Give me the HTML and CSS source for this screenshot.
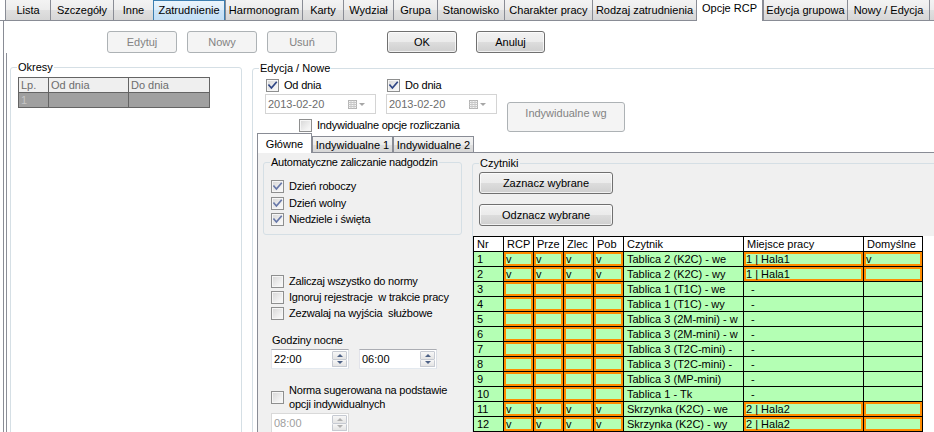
FILE: index.html
```html
<!DOCTYPE html>
<html lang="pl">
<head>
<meta charset="utf-8">
<title>Opcje RCP</title>
<link rel="stylesheet" href="styles.css">
</head>
<body>
<div class="app">
  <div class="tabs">
    <div class="tab w-lista">Lista</div>
    <div class="tab w-szcz">Szczegóły</div>
    <div class="tab w-inne">Inne</div>
    <div class="tab w-zatr hov">Zatrudnienie</div>
    <div class="tab w-harm">Harmonogram</div>
    <div class="tab w-karty">Karty</div>
    <div class="tab w-wydz">Wydział</div>
    <div class="tab w-grupa">Grupa</div>
    <div class="tab w-stan">Stanowisko</div>
    <div class="tab w-char">Charakter pracy</div>
    <div class="tab w-rodz">Rodzaj zatrudnienia</div>
    <div class="tab w-rcp sel">Opcje RCP</div>
    <div class="tab w-edg">Edycja grupowa</div>
    <div class="tab w-nowy">Nowy / Edycja</div>
    <div class="tab w-more"></div>
  </div>

  <div class="page">
    <div class="toolbar">
      <div class="btn dis">Edytuj</div>
      <div class="btn dis b-nowy">Nowy</div>
      <div class="btn dis b-usun">Usuń</div>
      <div class="btn b-ok">OK</div>
      <div class="btn b-anuluj">Anuluj</div>
    </div>

    <div class="main">
      <div class="gbox okresy">
        <span class="gtitle">Okresy</span>
        <table class="ptable">
          <tr><th class="c-lp">Lp.</th><th class="c-od">Od dnia</th><th class="c-do">Do dnia</th></tr>
          <tr><td>1</td><td></td><td></td></tr>
        </table>
      </div>

      <div class="gbox edycja">
        <span class="gtitle">Edycja / Nowe</span>
        <div class="erow1">
          <label class="chk c-oddnia"><span class="cb"><svg viewBox="0 0 11 11"><path d="M2 5.2 L4.4 8 L9.2 2.4" class="ck"/></svg></span>Od dnia</label>
          <label class="chk"><span class="cb"><svg viewBox="0 0 11 11"><path d="M2 5.2 L4.4 8 L9.2 2.4" class="ck"/></svg></span>Do dnia</label>
        </div>
        <div class="erow2">
          <div class="dcol">
            <div class="dates">
              <div class="dtp"><span>2013-02-20</span><svg class="cal" viewBox="0 0 9 9"><rect x="0.5" y="0.5" width="8" height="8" class="calr"/><path d="M0.5 2.5H8.5M0.5 4.5H8.5M0.5 6.5H8.5M3 0.5V8.5M6 0.5V8.5" class="calg"/></svg><span class="dda"></span></div>
              <div class="dtp"><span>2013-02-20</span><svg class="cal" viewBox="0 0 9 9"><rect x="0.5" y="0.5" width="8" height="8" class="calr"/><path d="M0.5 2.5H8.5M0.5 4.5H8.5M0.5 6.5H8.5M3 0.5V8.5M6 0.5V8.5" class="calg"/></svg><span class="dda"></span></div>
            </div>
            <label class="chk indyw"><span class="cb"></span>Indywidualne opcje rozliczania</label>
          </div>
          <div class="btn dis wg">Indywidualne wg</div>
        </div>

        <div class="itabs">
          <div class="itab isel">Główne</div>
          <div class="itab">Indywidualne 1</div>
          <div class="itab">Indywidualne 2</div>
        </div>

        <div class="tpage">
          <div class="lcol">
            <div class="gbox auto">
              <span class="gtitle">Automatyczne zaliczanie nadgodzin</span>
              <div class="alist">
                <label class="chk"><span class="cb"><svg viewBox="0 0 11 11"><path d="M2 5.2 L4.4 8 L9.2 2.4" class="ck lt"/></svg></span>Dzień roboczy</label>
                <label class="chk a2"><span class="cb"><svg viewBox="0 0 11 11"><path d="M2 5.2 L4.4 8 L9.2 2.4" class="ck lt"/></svg></span>Dzień wolny</label>
                <label class="chk a3"><span class="cb"><svg viewBox="0 0 11 11"><path d="M2 5.2 L4.4 8 L9.2 2.4" class="ck lt"/></svg></span>Niedziele i święta</label>
              </div>
            </div>
            <div class="opts">
              <label class="chk"><span class="cb"></span>Zaliczaj wszystko do normy</label>
              <label class="chk"><span class="cb"></span>Ignoruj rejestracje&nbsp; w trakcie pracy</label>
              <label class="chk"><span class="cb"></span>Zezwalaj na wyjścia&nbsp; służbowe</label>
            </div>
            <div class="gn">Godziny nocne</div>
            <div class="times">
              <div class="spin"><span>22:00</span><span class="sb"><i class="up"></i><i class="dn"></i></span></div>
              <div class="spin"><span>06:00</span><span class="sb"><i class="up"></i><i class="dn"></i></span></div>
            </div>
            <label class="chk norma"><span class="cb"></span><span>Norma sugerowana na podstawie<br>opcji indywidualnych</span></label>
            <div class="spin sdis"><span>08:00</span><span class="sb"><i class="up"></i><i class="dn"></i></span></div>
          </div>

          <div class="gbox czyt">
            <span class="gtitle">Czytniki</span>
            <div class="btn zb">Zaznacz wybrane</div>
            <div class="btn ob">Odznacz wybrane</div>
            <div class="gridwrap">
              <table class="grid">
                <tr><th class="g-nr">Nr</th><th class="g-f">RCP</th><th class="g-f">Prze</th><th class="g-f">Zlec</th><th class="g-f">Pob</th><th class="g-cz">Czytnik</th><th class="g-mp">Miejsce pracy</th><th class="g-dm">Domyślne</th></tr>
                <tr><td>1</td><td class="o">v</td><td class="o">v</td><td class="o">v</td><td class="o">v</td><td>Tablica 2 (K2C) - we</td><td class="o">1 | Hala1</td><td class="o">v</td></tr>
                <tr><td>2</td><td class="o">v</td><td class="o">v</td><td class="o">v</td><td class="o">v</td><td>Tablica 2 (K2C) - wy</td><td class="o">1 | Hala1</td><td class="o"></td></tr>
                <tr><td>3</td><td class="o"></td><td class="o"></td><td class="o"></td><td class="o"></td><td>Tablica 1 (T1C) - we</td><td class="dash">-</td><td></td></tr>
                <tr><td>4</td><td class="o"></td><td class="o"></td><td class="o"></td><td class="o"></td><td>Tablica 1 (T1C) - wy</td><td class="dash">-</td><td></td></tr>
                <tr><td>5</td><td class="o"></td><td class="o"></td><td class="o"></td><td class="o"></td><td>Tablica 3 (2M-mini) - w</td><td class="dash">-</td><td></td></tr>
                <tr><td>6</td><td class="o"></td><td class="o"></td><td class="o"></td><td class="o"></td><td>Tablica 3 (2M-mini) - w</td><td class="dash">-</td><td></td></tr>
                <tr><td>7</td><td class="o"></td><td class="o"></td><td class="o"></td><td class="o"></td><td>Tablica 3 (T2C-mini) -</td><td class="dash">-</td><td></td></tr>
                <tr><td>8</td><td class="o"></td><td class="o"></td><td class="o"></td><td class="o"></td><td>Tablica 3 (T2C-mini) -</td><td class="dash">-</td><td></td></tr>
                <tr><td>9</td><td class="o"></td><td class="o"></td><td class="o"></td><td class="o"></td><td>Tablica 3 (MP-mini)</td><td class="dash">-</td><td></td></tr>
                <tr><td>10</td><td class="o"></td><td class="o"></td><td class="o"></td><td class="o"></td><td>Tablica 1 - Tk</td><td class="dash">-</td><td></td></tr>
                <tr><td>11</td><td class="o">v</td><td class="o">v</td><td class="o">v</td><td class="o">v</td><td>Skrzynka (K2C) - we</td><td class="o">2 | Hala2</td><td class="o"></td></tr>
                <tr><td>12</td><td class="o">v</td><td class="o">v</td><td class="o">v</td><td class="o">v</td><td>Skrzynka (K2C) - wy</td><td class="o">2 | Hala2</td><td class="o"></td></tr>
              </table>
            </div>
          </div>
        </div>
      </div>
    </div>
  </div>
</div>
</body>
</html>
```

FILE: styles.css
```css
* { box-sizing: border-box; }
html, body { margin: 0; padding: 0; }
body {
  font-family: "Liberation Sans", Arial, sans-serif;
  font-size: 11px;
  color: #000;
  background: #fff;
}
.app { width: 934px; height: 432px; overflow: hidden; background: #fff; }

/* top tab strip */
.tabs {
  display: flex;
  height: 21px;
  padding-left: 5px;
  border-bottom: 1px solid #898c95;
  background: #fff;
}
.tab {
  flex: none;
  height: 20px;
  border-left: 1px solid #898c95;
  background: linear-gradient(#f3f3f3 0%, #ececec 50%, #e0e0e0 50%, #d6d6d6 100%);
  text-align: center;
  line-height: 20px;
  white-space: nowrap;
  overflow: hidden;
}
.tab.hov {
  border: 1px solid #3c7fb1;
  border-bottom: none;
  background: linear-gradient(#ebf5fc 0%, #dcedfa 50%, #cce4f7 50%, #c3dff5 100%);
  line-height: 19px;
}
.tab.sel {
  height: 21px;
  background: #fff;
  line-height: 17px;
  border-right: 1px solid #898c95;
}
.w-lista { width: 45px; }
.w-szcz { width: 63px; }
.w-inne { width: 40px; }
.w-zatr { width: 72px; }
.w-harm { width: 77px; }
.w-karty { width: 41px; }
.w-wydz { width: 50px; }
.w-grupa { width: 44px; }
.w-stan { width: 67px; }
.w-char { width: 88px; }
.w-rodz { width: 104px; }
.w-rcp { width: 67px; }
.w-edg { width: 84px; }
.w-nowy { width: 82px; }
.w-more { width: 20px; }

/* page */
.page {
  margin-left: 3px;
  height: 411px;
  border-left: 1px solid #898c95;
  background: #fff;
}
.toolbar {
  display: flex;
  height: 32px;
  padding: 10px 0 0 103px;
}
.btn {
  flex: none;
  display: flex;
  align-items: center;
  justify-content: center;
  width: 70px;
  height: 22px;
  border: 1px solid #707070;
  border-radius: 3px;
  background: linear-gradient(#f2f2f2 0%, #ebebeb 50%, #dddddd 50%, #cfcfcf 100%);
  box-shadow: inset 0 0 0 1px rgba(255, 255, 255, 0.7);
  color: #000;
  white-space: nowrap;
}
.btn.dis {
  border-color: #adb2b5;
  background: #f4f4f4;
  box-shadow: none;
  color: #838383;
}
.b-nowy, .b-usun { margin-left: 10px; }
.b-ok { margin-left: 50px; }
.b-anuluj { margin-left: 19px; width: 69px; }

.main {
  display: flex;
  align-items: flex-start;
  height: 379px;
  margin-left: 2px;
  padding-top: 14px;
  border-left: 1px solid #8c8f98;
}
.gbox {
  position: relative;
  flex: none;
  border: 1px solid #d5dfe5;
  border-radius: 3px;
}
.gtitle {
  position: absolute;
  top: -8px;
  left: 6px;
  padding: 0 1px;
  line-height: 14px;
  background: #fff;
  white-space: nowrap;
}

/* Okresy */
.okresy { margin-left: 3px; width: 232px; height: 400px; }
.ptable {
  margin: 9px 0 0 7px;
  border-collapse: separate;
  border-spacing: 0;
  table-layout: fixed;
  width: 192px;
  border-left: 1px solid #646464;
  border-top: 1px solid #646464;
}
.ptable th, .ptable td {
  height: 15px;
  padding: 0 0 0 2px;
  border-right: 1px solid #646464;
  border-bottom: 1px solid #646464;
  line-height: 14px;
  font-weight: normal;
  text-align: left;
  color: #6d6d6d;
  white-space: nowrap;
}
.ptable th { background: #efefef; }
.ptable td { background: #a0a0a0; color: #c6c6c6; }
.c-lp { width: 30px; }
.c-od { width: 80px; }
.c-do { width: 81px; }

/* Edycja / Nowe */
.edycja { margin: 1px 0 0 10px; width: 720px; height: 400px; }
.erow1 { display: flex; height: 13px; margin: 10px 0 0 13px; }
.chk {
  display: flex;
  align-items: center;
  gap: 5px;
  line-height: 13px;
  white-space: nowrap;
  letter-spacing: -0.2px;
}
.c-oddnia { width: 121px; }
.cb {
  flex: none;
  width: 13px;
  height: 13px;
  border: 1px solid #8e8f8f;
  background: linear-gradient(135deg, #d6d6d6 0%, #f2f2f2 70%, #fafafa 100%);
  box-shadow: inset 0 0 0 1px #f6f6f6;
}
.cb svg { display: block; width: 11px; height: 11px; }
.ck { fill: none; stroke: #2e4584; stroke-width: 1.7; stroke-linecap: square; }
.ck.lt { stroke: #6677a8; }

.erow2 { display: flex; margin: 2px 0 0 12px; }
.dates { display: flex; gap: 10px; }
.dtp {
  display: flex;
  align-items: center;
  width: 111px;
  height: 20px;
  padding-left: 2px;
  border: 1px solid #d4d4d4;
  background: #fff;
  color: #6d6d6d;
}
.cal { width: 9px; height: 9px; margin-left: auto; }
.calr { fill: #f4f4f4; stroke: #b4b4b4; }
.calg { fill: none; stroke: #c8c8c8; }
.dda {
  width: 0;
  height: 0;
  margin: 1px 10px 0 2px;
  border-left: 3px solid transparent;
  border-right: 3px solid transparent;
  border-top: 3px solid #a6a6a6;
}
.indyw { margin: 5px 0 0 34px; }
.wg {
  width: 118px;
  height: 30px;
  margin: 8px 0 0 10px;
  align-items: flex-start;
  padding-top: 4px;
}

/* inner tabs */
.itabs {
  display: flex;
  align-items: flex-end;
  height: 21px;
  margin-left: 4px;
  border-bottom: 1px solid #898c95;
}
.itab {
  flex: none;
  height: 16px;
  padding: 1px 0 0 0;
  border: 1px solid #898c95;
  border-bottom: none;
  background: linear-gradient(#f3f3f3 0%, #ececec 50%, #e0e0e0 50%, #d6d6d6 100%);
  line-height: 14px;
  text-align: center;
  white-space: nowrap;
  width: 81px;
}
.itab.isel {
  width: 55px;
  height: 20px;
  margin-bottom: -1px;
  padding-top: 3px;
  background: #fff;
}

.tpage {
  display: flex;
  align-items: flex-start;
  height: 300px;
  margin-left: 4px;
  border-left: 1px solid #898c95;
  background: #f0f0f0;
}
.tpage .gtitle { background: #f0f0f0; }
.auto .gtitle { letter-spacing: -0.25px; }
.lcol { flex: none; width: 199px; margin-left: 5px; }
.auto { width: 199px; height: 73px; margin-top: 9px; }
.alist { display: flex; flex-direction: column; margin: 17px 0 0 7px; }
.alist .a2 { margin-top: 4px; }
.alist .a3 { margin-top: 3px; }
.opts {
  display: flex;
  flex-direction: column;
  gap: 3px;
  margin: 40px 0 0 8px;
}
.gn { margin: 13px 0 0 9px; line-height: 14px; letter-spacing: -0.2px; }
.times { display: flex; gap: 10px; margin: 2px 0 0 8px; }
.spin {
  display: flex;
  align-items: center;
  justify-content: space-between;
  width: 78px;
  height: 20px;
  padding: 0 1px 0 2px;
  border: 1px solid #abadb3;
  border-color: #abadb3 #dbdfe6 #e3e9ef #e2e3ea;
  background: #fff;
}
.sb { display: flex; flex-direction: column; width: 15px; height: 16px; }
.sb i {
  flex: 1;
  display: flex;
  align-items: center;
  justify-content: center;
  border: 1px solid #c6cad2;
  border-radius: 1px;
  background: linear-gradient(#f7f7f7, #e4e4e4);
}
.sb i + i { border-top: none; }
.sb .up::after {
  content: "";
  border-left: 3px solid transparent;
  border-right: 3px solid transparent;
  border-bottom: 3px solid #4d6185;
}
.sb .dn::after {
  content: "";
  border-left: 3px solid transparent;
  border-right: 3px solid transparent;
  border-top: 3px solid #4d6185;
}
.norma { margin: 14px 0 0 8px; line-height: 14px; }
.spin.sdis {
  margin: 2px 0 0 8px;
  border-color: #d9d9d9;
  color: #a0a0a0;
}
.spin.sdis .sb .up::after { border-bottom-color: #b0b0b0; }
.spin.sdis .sb .dn::after { border-top-color: #b0b0b0; }

/* Czytniki */
.czyt { width: 480px; height: 300px; margin: 10px 0 0 10px; }
.zb, .ob { width: 134px; margin-left: 6px; }
.zb { margin-top: 8px; }
.ob { margin-top: 10px; }
.gridwrap { margin-top: 10px; height: 200px; background: #fff; }
.grid {
  border-collapse: separate;
  border-spacing: 0;
  table-layout: fixed;
  width: 450px;
  border-left: 1px solid #000;
  border-top: 1px solid #000;
}
.grid th, .grid td {
  height: 15px;
  padding: 0 0 0 3px;
  border-right: 1px solid #000;
  border-bottom: 1px solid #000;
  line-height: 14px;
  font-weight: normal;
  text-align: left;
  white-space: nowrap;
  overflow: hidden;
  background: #b4ffb4;
}
.grid th { background: #fff; }
.grid td.o { box-shadow: inset 0 0 0 2px #ff8c00; padding-left: 2px; }
.grid td.dash { padding-left: 7px; }
.g-nr, .g-f { width: 30px; }
.g-cz, .g-mp { width: 120px; }
.g-dm { width: 59px; }
```
